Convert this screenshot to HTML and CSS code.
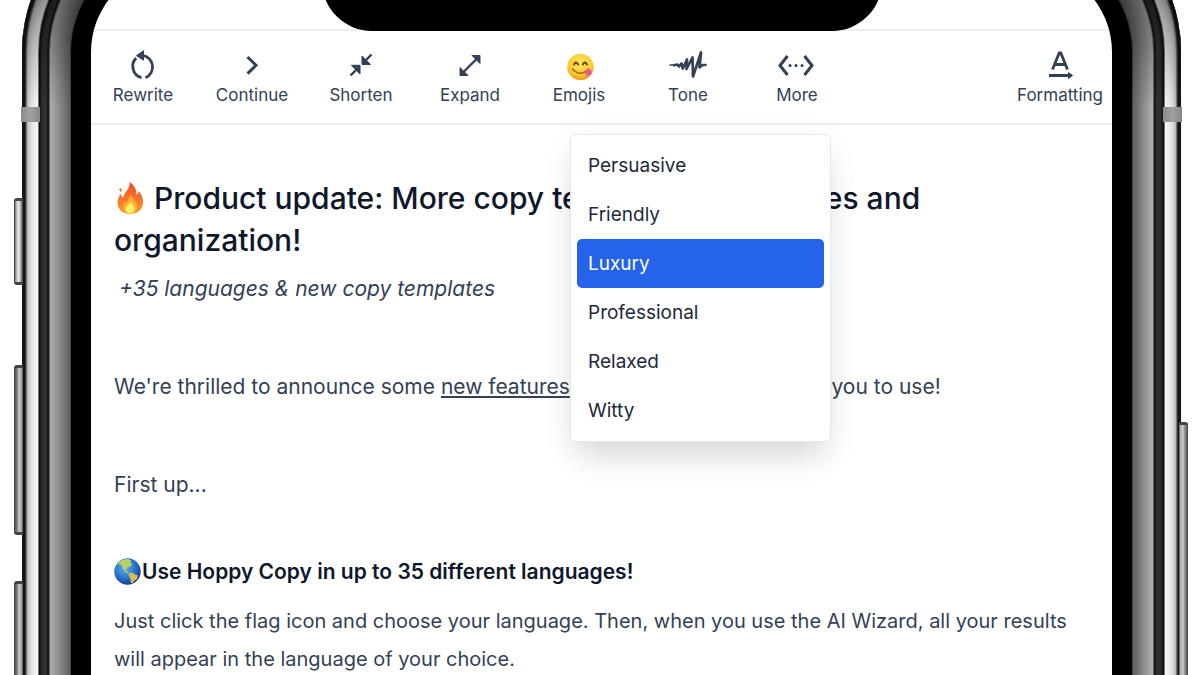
FILE: index.html
```
<!DOCTYPE html>
<html lang="en">
<head>
<meta charset="UTF-8">
<meta name="viewport" content="width=device-width, initial-scale=1">
<title>Hoppy Copy editor</title>
<link rel="stylesheet" href="styles.css">
</head>
<body>
<div class="phone">
  <span class="side side-mute"></span>
  <span class="side side-up"></span>
  <span class="side side-down"></span>
  <span class="side side-power"></span>
  <span class="antenna antenna-left"></span>
  <span class="antenna antenna-right"></span>

  <div class="screen">
    <div class="notch"></div>

    <nav class="toolbar">
      <button type="button" class="tool">
        <svg width="40" height="32" viewBox="0 0 40 32" fill="none" stroke="currentColor" stroke-width="2.8"><path d="M13.200 9A11.800 11.800 0 0 0 18.500 28.700"/><path d="M19 6.300A11.700 11.700 0 0 1 22.500 28.700"/><path d="M20.500 1.700v9.500l-7-4.500z" fill="currentColor" stroke-width="1"/></svg>
        <span>Rewrite</span>
      </button>
      <button type="button" class="tool">
        <svg width="40" height="32" viewBox="0 0 40 32" fill="none" stroke="currentColor" stroke-width="3"><path d="M15.500 8l8.500 8.300-8.500 8.300"/></svg>
        <span>Continue</span>
      </button>
      <button type="button" class="tool">
        <svg width="40" height="32" viewBox="0 0 40 32" fill="none" stroke="currentColor" stroke-width="2.400"><path d="M30.500 5.500L24 12M9.500 26.500L16 20"/><path d="M21 7v8.500h8.500z M19 25v-8.700h-8.500z" fill="currentColor" stroke-width="1"/></svg>
        <span>Shorten</span>
      </button>
      <button type="button" class="tool">
        <svg width="40" height="32" viewBox="0 0 40 32" fill="none" stroke="currentColor" stroke-width="2.400"><path d="M12 24.500L28 8.500"/><path d="M22 6.500h8v8z M10 18.500v8h8z" fill="currentColor" stroke-width="1"/></svg>
        <span>Expand</span>
      </button>
      <button type="button" class="tool">
        <svg width="40" height="32" viewBox="0 0 40 32">
          <defs><radialGradient id="face" cx="50%" cy="35%" r="65%"><stop offset="0" stop-color="#ffe75e"/><stop offset=".7" stop-color="#fdc92e"/><stop offset="1" stop-color="#ee9a1c"/></radialGradient></defs>
          <circle cx="21.500" cy="18" r="13.200" fill="url(#face)"/>
          <path d="M15 15.500q2-4 4.200 0M23.800 15.500q2-4 4.200 0" fill="none" stroke="#6b4312" stroke-width="1.800" stroke-linecap="round"/>
          <path d="M13.500 20q8 8.500 16 0" fill="none" stroke="#a8641a" stroke-width="1.500" stroke-linecap="round"/>
          <path d="M26 23.500c0-3 4-4.500 6-2.500 2 2.500-.5 6-3.500 5.700-1.500-.2-2.500-1.500-2.500-3.200z" fill="#f0569c"/>
        </svg>
        <span>Emojis</span>
      </button>
      <div class="tool-wrap">
        <button type="button" class="tool" aria-haspopup="true" aria-expanded="true">
          <svg width="40" height="32" viewBox="0 0 40 32" fill="none" stroke="currentColor" stroke-linejoin="round" stroke-linecap="round"><path d="M2 16h5" stroke-width="1.500"/><path d="M6 16.300l3.500-.8 1.500 2 2.500-3 1.300 5 4.200-9-.5 9.500 6-11.500L25 27.500 33 3.500l-1.500 15 3-2.500h3" stroke-width="2.700"/></svg>
          <span>Tone</span>
        </button>
        <div class="menu" role="menu">
          <button type="button" role="menuitem">Persuasive</button>
          <button type="button" role="menuitem">Friendly</button>
          <button type="button" role="menuitem" class="selected">Luxury</button>
          <button type="button" role="menuitem">Professional</button>
          <button type="button" role="menuitem">Relaxed</button>
          <button type="button" role="menuitem">Witty</button>
        </div>
      </div>
      <button type="button" class="tool">
        <svg width="40" height="32" viewBox="0 0 40 32" fill="none" stroke="currentColor" stroke-width="3"><path d="M10.500 7L3 16.500l7.500 9.500M27.500 7L35 16.500l-7.500 9.500"/><path d="M13 16.500h.1M19 16.500h.1M25 16.500h.1" stroke-linecap="round"/></svg>
        <span>More</span>
      </button>
      <button type="button" class="tool tool-format">
        <svg width="40" height="32" viewBox="0 0 40 32" fill="none" stroke="currentColor" stroke-width="2.800"><path d="M12.500 20.500L19.200 4h1.600l6.700 16.500M15.200 15.500h9.600" /><path d="M9 26.500h21"/><path d="M28.500 23.500l4 3-4 3z" fill="currentColor" stroke-width="1"/></svg>
        <span>Formatting</span>
      </button>
    </nav>

    <div class="editor">
      <h1><svg class="fire" width="32" height="34" viewBox="0 0 32 34">
        <defs><linearGradient id="flame" x1="0" y1="0" x2="0" y2="1"><stop offset="0" stop-color="#f04a23"/><stop offset=".6" stop-color="#ff7a2c"/><stop offset="1" stop-color="#ff9a1f"/></linearGradient></defs>
        <path d="M15.500 1c5 3.500 7.500 8 7 13 1.300-1 2-2.300 2.300-4C28.500 15 29.500 19 29 23c-.8 6-6 10-12.700 10C9 33 3.500 28.500 3.500 22c0-4 1.500-7 3.500-9.500.2 2 .8 3.500 2 4.500C10 11 16.500 8.500 15.500 1z" fill="url(#flame)"/>
        <path d="M5 8.500l2-1.500 1 2-1.500 2z" fill="#f4673b"/>
        <path d="M16.500 13c.5 4 6.500 6 6.500 12.500 0 4.500-3 7-6.700 7-4 0-7.300-2.500-7.300-7 0-2.500 1-4.500 2-5.500.5 1.500 1 2.200 2 2.800 0-4 3.500-6 3.500-9.800z" fill="#ffb02e"/>
        <path d="M16.500 21c2 2.500 4.500 4 4 7.500-.3 2.500-2.200 4-4.300 4-2.500 0-4.700-1.500-4.700-4.200 0-3 3.500-4.300 5-7.300z" fill="#fff06a"/>
      </svg> Product update: More copy templates, languages and organization!</h1>
      <p class="subtitle">+35 languages &amp; new copy templates</p>
      <p class="spaced">We're thrilled to announce some <a href="#features">new features</a> that are now available for you to use!</p>
      <p class="spaced">First up...</p>
      <h2><svg class="globe" width="27" height="27" viewBox="0 0 27 27">
        <defs><radialGradient id="sea" cx="40%" cy="35%" r="65%"><stop offset="0" stop-color="#5eb0ee"/><stop offset=".6" stop-color="#2c74cf"/><stop offset="1" stop-color="#143f92"/></radialGradient></defs>
        <circle cx="13.500" cy="13.500" r="13.200" fill="url(#sea)"/>
        <path d="M3 6.500C6 2.500 10 .8 14 1l3.500 1.500-1 2.500 2 1-3 3-2.500.5-1 3 2.500 2 .5 1.500-3-1.500-3-3.500-1.500-4-2.500-1z" fill="#b9cf63"/>
        <path d="M15 15l3.500-.5 2.500 2 3 1-1 3.500-3 2-1.500 2.500-1.800-1-.2-4-2-2.500z" fill="#d6bd55"/>
      </svg>Use Hoppy Copy in up to 35 different languages!</h2>
      <p class="details">Just click the flag icon and choose your language. Then, when you use the AI Wizard, all your results will appear in the language of your choice.</p>
    </div>
  </div>
</div>
</body>
</html>
```

FILE: styles.css
```
* {
	box-sizing: border-box;
}
html {
	height: 100%;
	overflow: hidden;
}
body {
	height: 100%;
	margin: 0;
	overflow: hidden;
	background: #fff;
	color: #334155;
	font-family: Inter, "Liberation Sans", sans-serif;
	font-size: 21px;
	line-height: 38px;
}
button {
	margin: 0;
	border: 0;
	background: none;
	color: inherit;
	font: inherit;
	cursor: pointer;
}

/* phone body: the metal rim is a stack of inset rings, outside in */
.phone {
	position: relative;
	min-height: calc(100vh + 280px);
	margin: -103px 19px 0 22px;
	padding: 69px;
	border-radius: 155px;
	background: #000;
	box-shadow:
		inset 0 0 0 3px #141414,
		inset 0 0 0 4px #333,
		inset 0 0 0 5px #777,
		inset 0 0 0 6px #b4b4b4,
		inset 0 0 0 8px #cecece,
		inset 0 0 0 10px #dedede,
		inset 0 0 0 12px #e8e8e8,
		inset 0 0 0 14px #f0f0f0,
		inset 0 0 0 16px #f6f6f6,
		inset 0 0 0 17px #777,
		inset 0 0 0 18px #0c0c0c,
		inset 0 0 0 20px #1e1e1e,
		inset 0 0 0 25px #303030,
		inset 0 0 0 27px #181818,
		inset 0 0 0 28px #666,
		inset 0 0 0 30px #aaa,
		inset 0 0 0 32px #a4a4a4,
		inset 0 0 0 34px #9c9c9c,
		inset 0 0 0 36px #949494,
		inset 0 0 0 38px #8c8c8c,
		inset 0 0 0 40px #848484,
		inset 0 0 0 42px #7c7c7c,
		inset 0 0 0 44px #747474,
		inset 0 0 0 46px #6c6c6c,
		inset 0 0 0 48px #646464,
		inset 0 0 0 49px #444;
}
/* shade where the rim bends over the top */
.phone::before {
	content: "";
	position: absolute;
	inset: 0 0 auto;
	height: 210px;
	border-radius: 155px 155px 0 0;
	background: linear-gradient(rgba(0, 0, 0, .4) 100px, rgba(0, 0, 0, 0));
}
.screen {
	position: relative;
	min-height: calc(100vh + 120px);
	padding-top: 63px;
	border-radius: 86px;
	overflow: hidden;
	background: #fff;
}
.notch {
	position: absolute;
	top: 0;
	left: 50%;
	width: 560px;
	height: 65px;
	margin-left: -280px;
	border-radius: 0 0 50px 50px;
	background: #000;
}

.side {
	position: absolute;
	left: -8px;
	width: 9px;
	border: 1px solid #444;
	border-width: 3px 0 3px 1px;
	border-radius: 3px 0 0 3px;
	background: linear-gradient(to right, #555, #777 2px, #ccc 4px, #999 7px, #333);
}
.side-mute {
	top: 301px;
	height: 87px;
	background: linear-gradient(to right, #777, #eee 3px, #ccc 5px, #333);
}
.side-up {
	top: 468px;
	height: 170px;
}
.side-down {
	top: 684px;
	height: 170px;
}
.side-power {
	top: 525px;
	right: -7px;
	left: auto;
	height: 270px;
	border-width: 3px 1px 3px 0;
	border-radius: 0 3px 3px 0;
	background: linear-gradient(to left, #666, #888 2px, #ccc 4px, #aaa 7px, #333);
}
.antenna {
	position: absolute;
	top: 210px;
	width: 19px;
	height: 15px;
	background: linear-gradient(to right, #8c8c8c, #a0a0a0, #868686);
}
.antenna-left {
	left: -1px;
}
.antenna-right {
	right: -1px;
}

.toolbar {
	display: flex;
	gap: 39px;
	padding: 18px 8px 16px 17px;
	border-top: 2px solid #ededed;
	border-bottom: 2px solid #ededed;
}
.tool {
	display: flex;
	flex-direction: column;
	align-items: center;
	width: 70px;
	padding: 0;
	font-size: 17px;
	line-height: 24px;
}
.tool svg {
	margin-bottom: 2px;
}
.tool-format {
	width: 88px;
	margin-left: auto;
}
.tool-wrap {
	position: relative;
}

.menu {
	position: absolute;
	top: 85px;
	left: -83px;
	z-index: 1;
	width: 261px;
	padding: 6px;
	border: 1px solid #e5e7eb;
	border-radius: 5px;
	background: #fff;
	box-shadow: 0 20px 30px -6px rgba(0, 0, 0, .14), 0 4px 40px rgba(0, 0, 0, .03);
	color: #1e293b;
	font-size: 19px;
	line-height: 49px;
}
.menu button {
	display: block;
	width: 100%;
	padding: 0 11px;
	border-radius: 5px;
	text-align: left;
}
.menu .selected {
	background: #2563eb;
	color: #fff;
}

.editor {
	padding: 52px 8px 0 23px;
}
.editor h1 {
	margin: 0;
	padding-right: 120px;
	color: #0f172a;
	font-size: 30px;
	font-weight: 500;
	line-height: 42px;
}
.editor h2 {
	margin: 49px 0 11px;
	color: #0f172a;
	font-size: 21px;
	font-weight: 600;
	line-height: 38px;
}
.editor p {
	margin: 0;
}
.editor .subtitle {
	margin-top: 9px;
	padding-left: 5px;
	font-style: italic;
}
.editor .spaced {
	margin-top: 60px;
}
.editor .details {
	padding-right: 16px;
	font-size: 20px;
}
.editor a {
	color: inherit;
	text-decoration: underline;
}
.fire {
	vertical-align: -6px;
}
.globe {
	margin-right: 1px;
	vertical-align: -6px;
}
```
